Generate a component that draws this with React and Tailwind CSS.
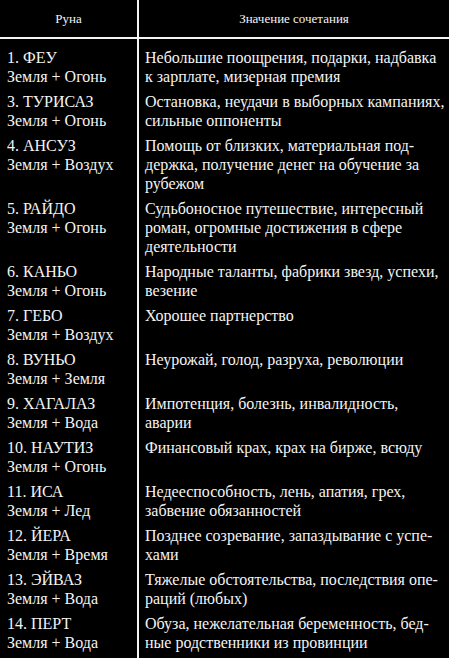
import React from "react";

const rows = [
  { rune: "1. ФЕУ", elem: "Земля + Огонь", text: ["Небольшие поощрения, подарки, надбавка", "к зарплате, мизерная премия"] },
  { rune: "3. ТУРИСАЗ", elem: "Земля + Огонь", text: ["Остановка, неудачи в выборных кампаниях,", "сильные оппоненты"] },
  { rune: "4. АНСУЗ", elem: "Земля + Воздух", text: ["Помощь от близких, материальная под-", "держка, получение денег на обучение за", "рубежом"] },
  { rune: "5. РАЙДО", elem: "Земля + Огонь", text: ["Судьбоносное путешествие, интересный", "роман, огромные достижения в сфере", "деятельности"] },
  { rune: "6. КАНЬО", elem: "Земля + Огонь", text: ["Народные таланты, фабрики звезд, успехи,", "везение"] },
  { rune: "7. ГЕБО", elem: "Земля + Воздух", text: ["Хорошее партнерство"] },
  { rune: "8. ВУНЬО", elem: "Земля + Земля", text: ["Неурожай, голод, разруха, революции"] },
  { rune: "9. ХАГАЛАЗ", elem: "Земля + Вода", text: ["Импотенция, болезнь, инвалидность,", "аварии"] },
  { rune: "10. НАУТИЗ", elem: "Земля + Огонь", text: ["Финансовый крах, крах на бирже, всюду"] },
  { rune: "11. ИСА", elem: "Земля + Лед", text: ["Недееспособность, лень, апатия, грех,", "забвение обязанностей"] },
  { rune: "12. ЙЕРА", elem: "Земля + Время", text: ["Позднее созревание, запаздывание с успе-", "хами"] },
  { rune: "13. ЭЙВАЗ", elem: "Земля + Вода", text: ["Тяжелые обстоятельства, последствия опе-", "раций (любых)"] },
  { rune: "14. ПЕРТ", elem: "Земля + Вода", text: ["Обуза, нежелательная беременность, бед-", "ные родственники из провинции"] },
];

export default function App() {
  return (
    <div className="w-[449px] h-[658px] bg-black text-[#f4f4f4] overflow-hidden font-[family-name:Liberation_Serif,DejaVu_Serif,serif]">
      {/* header */}
      <div className="flex h-[39px] border-b-2 border-[#f4f4f4] text-[13px]">
        <div className="w-[137px] flex items-center justify-center">Руна</div>
        <div className="flex-1 border-l-2 border-[#f4f4f4] flex items-center justify-center">
          Значение сочетания
        </div>
      </div>

      <div className="flex h-[6px]">
        <div className="w-[137px]" />
        <div className="flex-1 border-l-2 border-[#f4f4f4]" />
      </div>

      {rows.map((r) => (
        <div key={r.rune} className="flex text-[16px] leading-[19px]">
          <div className="w-[137px] pl-[7px] py-[3px] whitespace-nowrap">
            <div>{r.rune}</div>
            <div>{r.elem}</div>
          </div>
          <div className="flex-1 border-l-2 border-[#f4f4f4] pl-[6px] py-[3px] whitespace-nowrap">
            {r.text.map((t, i) => (
              <div key={i}>{t}</div>
            ))}
          </div>
        </div>
      ))}

      <div className="flex h-[3px]">
        <div className="w-[137px]" />
        <div className="flex-1 border-l-2 border-[#f4f4f4]" />
      </div>
    </div>
  );
}
